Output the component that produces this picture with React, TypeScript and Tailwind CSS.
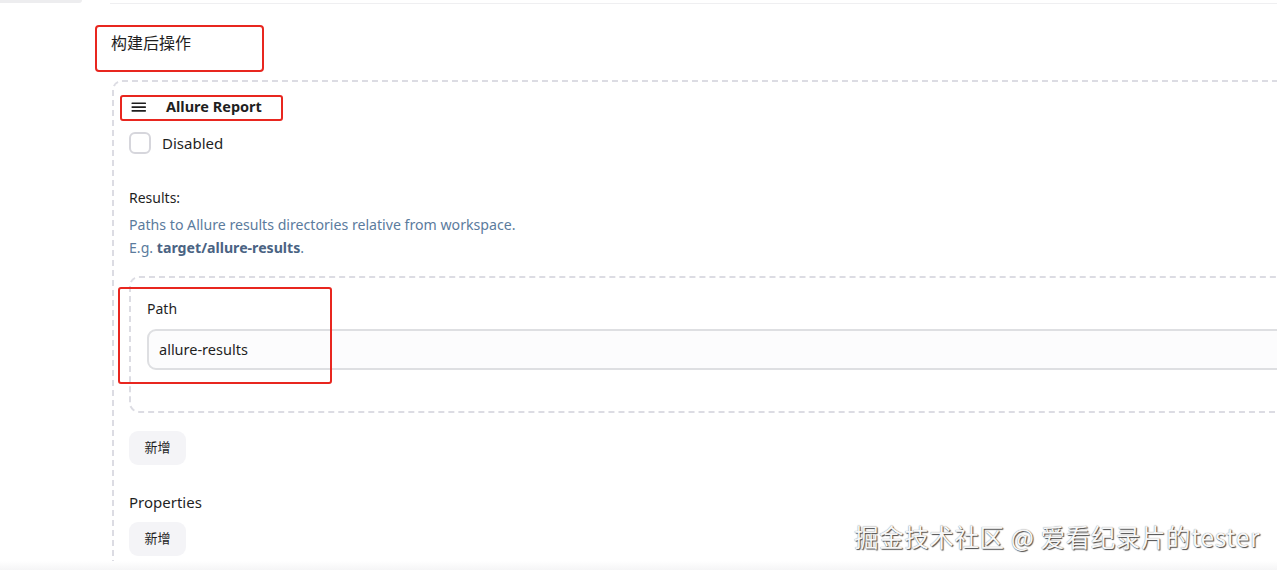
import React from "react";

function Hamburger() {
  return (
    <svg width="16" height="12" viewBox="0 0 16 12" className="shrink-0">
      <rect x="0.5" y="1.5" width="14.5" height="1.6" rx="0.6" fill="#1f1f1f" />
      <rect x="0.5" y="5.3" width="14.5" height="1.6" rx="0.6" fill="#1f1f1f" />
      <rect x="0.5" y="9.1" width="14.5" height="1.6" rx="0.6" fill="#1f1f1f" />
    </svg>
  );
}

function AddButton() {
  return (
    <button className="w-[57px] h-[34px] rounded-[9px] bg-[#f4f4f7] text-[13px] text-[#1f1f1f] flex items-center justify-center">
      新增
    </button>
  );
}

export default function App() {
  return (
    <div
      className="relative w-[1277px] h-[570px] overflow-hidden bg-white text-[#1f1f1f]"
      style={{ fontFamily: '"Noto Sans", "Noto Sans CJK SC", sans-serif' }}
    >
      {/* tail of the previous section */}
      <div className="flex h-[5px]">
        <div className="w-[82px] h-[3px] bg-[#ededef] rounded-br-[6px]" />
        <div className="ml-[28px] flex-1 h-[4px] border-b border-[#efeff1]" />
      </div>

      {/* post-build section */}
      <div className="pl-[111px] pt-[26px]">
        <h2 className="text-[16px] leading-[24px] font-normal">构建后操作</h2>
      </div>

      <div className="ml-[112px] mr-[-40px] mt-[25px] border-2 border-dashed border-[#dcdce3] border-b-0 rounded-tl-[10px] pl-[15px] h-[520px]">
        {/* chunk header */}
        <div className="flex items-center h-[24px] mt-[13px] pl-[2px] gap-[19px]">
          <Hamburger />
          <span className="text-[14.5px] font-bold">Allure Report</span>
        </div>

        <label className="flex items-center gap-[11px] mt-[13px] h-[22px]">
          <span className="w-[22px] h-[22px] rounded-[6px] border-2 border-[#d6d6dc] bg-white" />
          <span className="text-[15px] leading-[22px]">Disabled</span>
        </label>

        <div className="mt-[34px] text-[14px] leading-[20px]">Results:</div>
        <div className="mt-[5px] text-[14.15px] leading-[23px] text-[#5b7b9d]">
          <div>Paths to Allure results directories relative from workspace.</div>
          <div>
            E.g. <b className="font-bold text-[#4a6383]">target/allure-results</b>.
          </div>
        </div>

        {/* repeatable path entry */}
        <div className="mt-[17px] h-[137px] border-2 border-dashed border-[#dcdce3] border-r-0 rounded-l-[10px] pl-[16px]">
          <div className="mt-[21px] text-[14px] leading-[20px]">Path</div>
          <div className="mt-[10px] h-[41px] rounded-[9px] border-2 border-[#dedfe2] bg-[#fcfcfd] flex items-center pl-[10px] text-[14.5px]">
            allure-results
          </div>
        </div>

        <div className="mt-[18px]">
          <AddButton />
        </div>

        <div className="mt-[26px] text-[15px] leading-[22px]">Properties</div>
        <div className="mt-[9px]">
          <AddButton />
        </div>
      </div>

      {/* bottom fade */}
      <div className="absolute left-0 right-0 bottom-0 h-[9px] bg-gradient-to-b from-[#ffffff] to-[#f5f5f6]" />

      {/* annotation boxes */}
      <div className="absolute left-[95px] top-[25px] w-[169px] h-[47px] border-2 border-[#e8261f] rounded-[4px]" />
      <div className="absolute left-[120px] top-[95px] w-[163px] h-[26px] border-2 border-[#e8261f] rounded-[3px]" />
      <div className="absolute left-[118px] top-[287px] w-[214px] h-[97px] border-2 border-[#e8261f] rounded-[3px]" />

      {/* watermark */}
      <div
        className="absolute left-[854px] top-[521px] text-[24.5px] leading-[32px] text-[#f7f7f7] [text-shadow:1px_1px_1px_#4a4a4a,0_0_1px_#7a7a7a] tracking-[0.6px]"
        style={{ fontFamily: '"Noto Sans CJK SC", "Noto Sans", sans-serif' }}
      >
        掘金技术社区 @ 爱看纪录片的tester
      </div>
    </div>
  );
}
